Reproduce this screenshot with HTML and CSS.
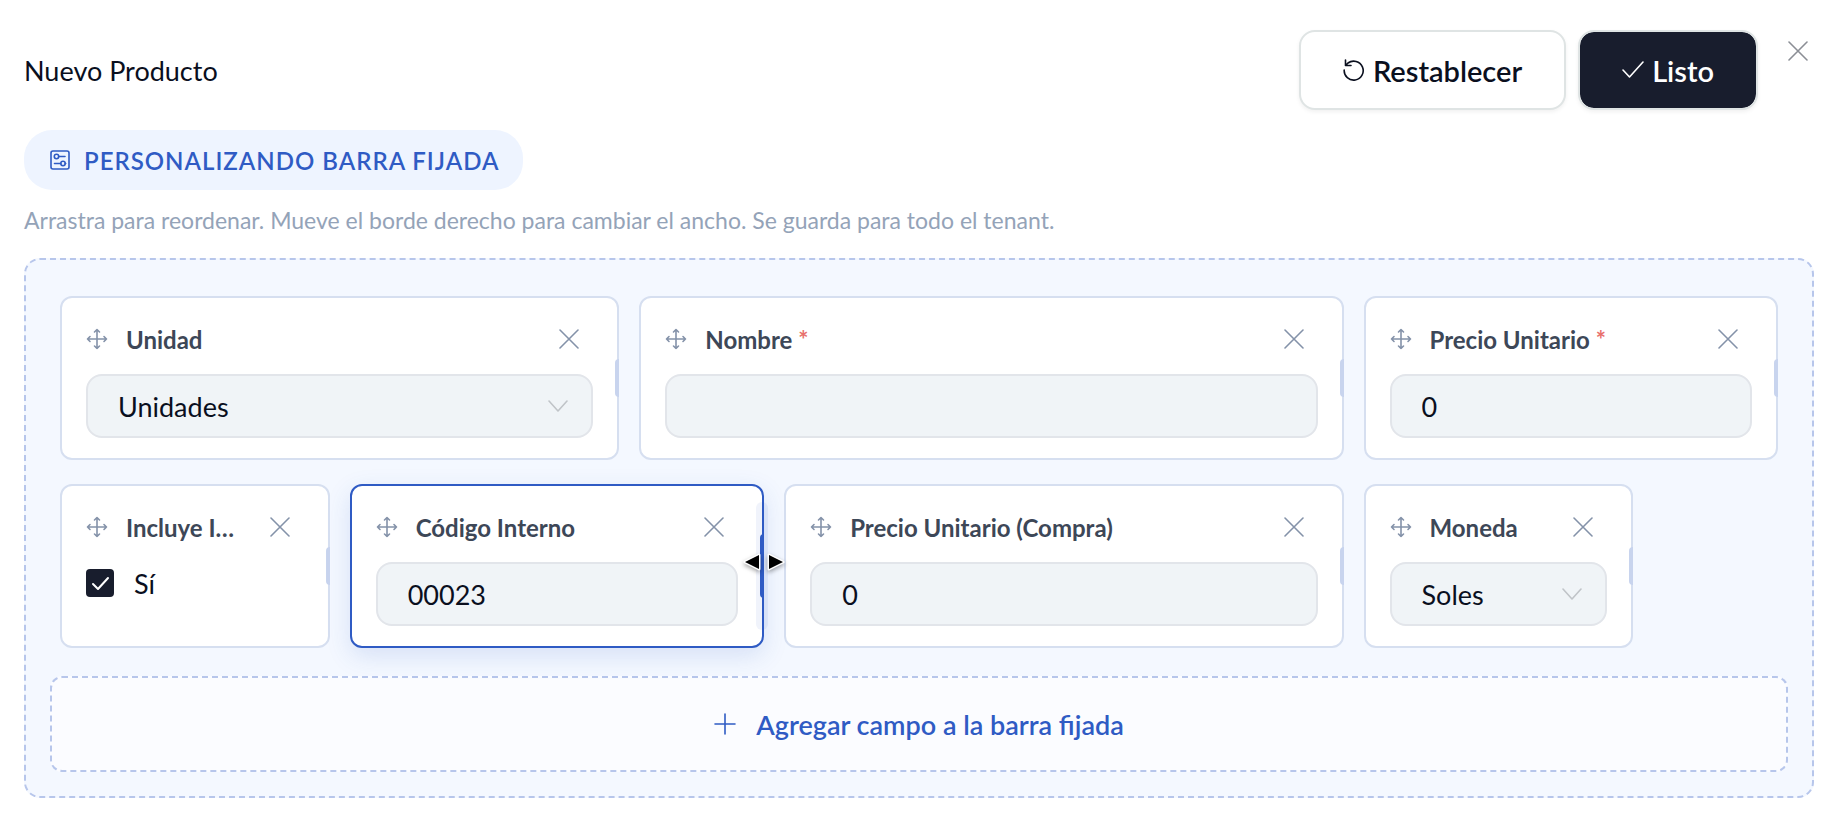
FILE: index.html
```html
<!DOCTYPE html>
<html lang="es">

    <head>
        <meta charset="UTF-8">
        <meta name="viewport" content="width=device-width, initial-scale=1.0">
        <title>Nuevo Producto</title>
        <link rel="stylesheet" href="styles.css">
    </head>

    <body>
        <!-- Iconos compartidos -->
        <svg class="sprite" aria-hidden="true">
            <symbol id="icon-move" viewBox="0 0 22 22">
                <path d="M11 1.500v19M1.500 11h19M8.500 4L11 1.500L13.500 4M8.500 18L11 20.500l2.500-2.500M4 8.500L1.500 11L4 13.500M18 8.500l2.500 2.500L18 13.500" />
            </symbol>
            <symbol id="icon-close" viewBox="0 0 20 20">
                <path d="M1 1l18 18M19 1L1 19" />
            </symbol>
            <symbol id="icon-chevron" viewBox="0 0 20 12">
                <path d="M1 1l9 10 9-10" />
            </symbol>
        </svg>

        <main class="dialog">
            <header class="dialog-header">
                <h1>Nuevo Producto</h1>
                <div class="actions">
                    <button type="button" class="btn">
                        <svg class="icon" width="22" height="22" viewBox="0 0 22 22"><path d="M2.500 1v5.500H8M2.500 6.500L5 4A9.500 9.500 0 1 1 1.200 11" /></svg>
                        Restablecer
                    </button>
                    <button type="button" class="btn btn-dark">
                        <svg class="icon" width="22" height="22" viewBox="0 0 22 22"><path d="M1 11l6.500 7L21 3" /></svg>
                        Listo
                    </button>
                </div>
                <button type="button" class="dialog-close" aria-label="Cerrar">
                    <svg class="icon" width="20" height="20"><use href="#icon-close" /></svg>
                </button>
            </header>

            <div class="badge">
                <svg class="icon" width="20" height="20" viewBox="0 0 20 20">
                    <rect x="1" y="1" width="18" height="18" rx="2" />
                    <circle cx="6.500" cy="6.500" r="2.200" />
                    <circle cx="13" cy="13.500" r="2.200" />
                    <path d="M8.700 6.500H15M4.500 13.500h6.300M15.200 13.500h.5" />
                </svg>
                PERSONALIZANDO BARRA FIJADA
            </div>
            <p class="hint">Arrastra para reordenar. Mueve el borde derecho para cambiar el ancho. Se guarda para todo el tenant.</p>

            <section class="canvas">
                <div class="grid">
                    <div class="card span-4">
                        <div class="card-header">
                            <svg class="icon" width="22" height="22"><use href="#icon-move" /></svg>
                            <label for="unidad">Unidad</label>
                            <button type="button" class="remove" aria-label="Quitar Unidad"><svg class="icon" width="20" height="20"><use href="#icon-close" /></svg></button>
                        </div>
                        <div class="select">
                            <select id="unidad" class="control"><option>Unidades</option></select>
                            <svg class="icon" width="20" height="12"><use href="#icon-chevron" /></svg>
                        </div>
                        <span class="handle"></span>
                    </div>

                    <div class="card span-5">
                        <div class="card-header">
                            <svg class="icon" width="22" height="22"><use href="#icon-move" /></svg>
                            <label for="nombre">Nombre <span class="required">*</span></label>
                            <button type="button" class="remove" aria-label="Quitar Nombre"><svg class="icon" width="20" height="20"><use href="#icon-close" /></svg></button>
                        </div>
                        <input type="text" id="nombre" class="control">
                        <span class="handle"></span>
                    </div>

                    <div class="card span-3">
                        <div class="card-header">
                            <svg class="icon" width="22" height="22"><use href="#icon-move" /></svg>
                            <label for="precio">Precio Unitario <span class="required">*</span></label>
                            <button type="button" class="remove" aria-label="Quitar Precio Unitario"><svg class="icon" width="20" height="20"><use href="#icon-close" /></svg></button>
                        </div>
                        <input type="text" id="precio" class="control" value="0">
                        <span class="handle"></span>
                    </div>

                    <div class="card span-2">
                        <div class="card-header">
                            <svg class="icon" width="22" height="22"><use href="#icon-move" /></svg>
                            <span class="label">Incluye IGV</span>
                            <button type="button" class="remove" aria-label="Quitar Incluye IGV"><svg class="icon" width="20" height="20"><use href="#icon-close" /></svg></button>
                        </div>
                        <label class="check">
                            <input type="checkbox" checked>
                            <svg class="icon" width="28" height="28" viewBox="0 0 28 28"><path d="M7 15l5 5L22 9" /></svg>
                            Sí
                        </label>
                        <span class="handle"></span>
                    </div>

                    <div class="card span-3 active">
                        <div class="card-header">
                            <svg class="icon" width="22" height="22"><use href="#icon-move" /></svg>
                            <label for="codigo">Código Interno</label>
                            <button type="button" class="remove" aria-label="Quitar Código Interno"><svg class="icon" width="20" height="20"><use href="#icon-close" /></svg></button>
                        </div>
                        <input type="text" id="codigo" class="control" value="00023">
                        <span class="handle-area"></span>
                        <span class="handle"></span>
                        <svg class="resize-cursor" width="44" height="24" viewBox="0 0 44 24">
                            <path d="M3 12L17 5v14zM41 12L27 5v14z" />
                        </svg>
                    </div>

                    <div class="card span-4">
                        <div class="card-header">
                            <svg class="icon" width="22" height="22"><use href="#icon-move" /></svg>
                            <label for="compra">Precio Unitario (Compra)</label>
                            <button type="button" class="remove" aria-label="Quitar Precio Unitario (Compra)"><svg class="icon" width="20" height="20"><use href="#icon-close" /></svg></button>
                        </div>
                        <input type="text" id="compra" class="control" value="0">
                        <span class="handle"></span>
                    </div>

                    <div class="card span-2">
                        <div class="card-header">
                            <svg class="icon" width="22" height="22"><use href="#icon-move" /></svg>
                            <label for="moneda">Moneda</label>
                            <button type="button" class="remove" aria-label="Quitar Moneda"><svg class="icon" width="20" height="20"><use href="#icon-close" /></svg></button>
                        </div>
                        <div class="select">
                            <select id="moneda" class="control"><option>Soles</option></select>
                            <svg class="icon" width="20" height="12"><use href="#icon-chevron" /></svg>
                        </div>
                        <span class="handle"></span>
                    </div>
                </div>

                <button type="button" class="add-field">
                    <svg class="icon" width="22" height="22" viewBox="0 0 22 22"><path d="M11 1v20M1 11h20" /></svg>
                    Agregar campo a la barra fijada
                </button>
            </section>
        </main>
    </body>

</html>
```
FILE: styles.css
```css
:root {
    --blue: #2f5bc4;
    --dark: #181d2d;
    --text: #0a0f1e;
    --label: #3d4757;
    --muted: #8492a9;
    --dashed: #b7c6eb;
    --card-border: #d6dff0;
}

*,
*::before,
*::after {
    box-sizing: border-box;
}

body {
    margin: 0;
    font-family: Lato, "Open Sans", sans-serif;
    font-size: 27px;
    color: var(--text);
    background: white;
}

button,
input,
select {
    font: inherit;
    color: inherit;
}

button {
    cursor: pointer;
}

.sprite {
    position: absolute;
    width: 0;
    height: 0;
}

.icon {
    flex: none;
    fill: none;
    stroke: currentColor;
    stroke-width: 1.6;
    stroke-linecap: round;
    stroke-linejoin: round;
}

.dialog {
    padding: 30px 30px 30px 24px;
}

/* Header */
.dialog-header {
    display: flex;
    align-items: center;
    margin-bottom: 20px;
}

h1 {
    margin: 0;
    font-size: 27px;
    font-weight: 400;
}

.actions {
    display: flex;
    gap: 12px;
    margin-left: auto;
}

.btn {
    display: flex;
    align-items: center;
    gap: 8px;
    height: 80px;
    padding: 0 42px;
    border: 2px solid #dfe4e4;
    border-radius: 16px;
    background: white;
    font-size: 29px;
    font-weight: 600;
    box-shadow: 0 2px 4px rgba(0, 0, 0, 0.06);
}

.btn-dark {
    background: var(--dark);
    background-clip: padding-box;
    color: white;
}

.dialog-close {
    display: flex;
    align-items: center;
    justify-content: center;
    align-self: flex-start;
    width: 32px;
    height: 42px;
    margin-left: 24px;
    padding: 0;
    border: none;
    background: none;
    color: #8b8e95;
}

.badge {
    display: flex;
    align-items: center;
    gap: 14px;
    width: fit-content;
    height: 60px;
    padding: 0 24px 0 26px;
    border-radius: 28px;
    background: #eef4ff;
    color: var(--blue);
    font-size: 24px;
    font-weight: 600;
    letter-spacing: 1px;
}

.hint {
    margin: 14px 0 22px;
    font-size: 23px;
    line-height: 32px;
    color: #94a3b8;
}

/* Canvas */
.canvas {
    padding: 24px;
    border: 2px dashed var(--dashed);
    border-radius: 16px;
    background: #f4f8ff;
}

.grid {
    display: grid;
    grid-template-columns: repeat(12, minmax(0, 1fr));
    gap: 24px 20px;
    padding: 12px 10px;
    margin-bottom: 16px;
}

.card {
    position: relative;
    padding: 20px 24px;
    border: 2px solid var(--card-border);
    border-radius: 12px;
    background: white;
}

.span-2 {
    grid-column: span 2;
}

.span-3 {
    grid-column: span 3;
}

.span-4 {
    grid-column: span 4;
}

.span-5 {
    grid-column: span 5;
}

.active {
    z-index: 1;
    border-color: var(--blue);
    box-shadow: 0 8px 24px rgba(47, 91, 196, 0.15);
}

.card-header {
    display: flex;
    align-items: center;
    height: 42px;
    margin-bottom: 14px;
    color: var(--muted);
}

.card-header label,
.card-header .label {
    flex: 1;
    min-width: 0;
    margin-left: 18px;
    font-size: 24px;
    font-weight: 700;
    color: var(--label);
    white-space: nowrap;
    overflow: hidden;
    text-overflow: ellipsis;
}

.required {
    color: #e8706c;
}

.remove {
    display: flex;
    flex: none;
    align-items: center;
    justify-content: center;
    width: 48px;
    height: 42px;
    margin-left: 12px;
    padding: 0;
    border: none;
    background: none;
}

.control {
    display: block;
    width: 100%;
    height: 64px;
    padding: 0 30px;
    border: 2px solid #e2e5ea;
    border-radius: 16px;
    outline: none;
    background: #f0f4f7;
    appearance: none;
}

.select {
    position: relative;
}

.select .icon {
    position: absolute;
    top: 26px;
    right: 25px;
    color: #c0c4c8;
    pointer-events: none;
}

.check {
    position: relative;
    display: flex;
    align-items: center;
    gap: 20px;
    height: 46px;
}

.check input {
    width: 28px;
    height: 28px;
    margin: 0;
    border-radius: 4px;
    background: var(--dark);
    appearance: none;
}

.check .icon {
    position: absolute;
    left: 0;
    color: white;
    stroke-width: 2;
}

.card-header:has(+ .check) {
    margin-bottom: 12px;
}

/* Resize handle on the right edge */
.handle {
    position: absolute;
    top: calc(50% - 19px);
    right: -2px;
    width: 4px;
    height: 38px;
    border-radius: 4px 0 0 4px;
    background: #c8d4ee;
}

.active .handle {
    top: calc(50% - 32px);
    height: 64px;
    background: var(--blue);
}

.handle-area {
    position: absolute;
    top: 16px;
    right: -6px;
    width: 12px;
    height: 128px;
    border-radius: 6px;
    background: rgba(47, 91, 196, 0.07);
}

.resize-cursor {
    position: absolute;
    top: 64px;
    right: -24px;
    fill: black;
    stroke: white;
    stroke-width: 3;
    stroke-linejoin: round;
    paint-order: stroke;
    filter: drop-shadow(0 2px 2px rgba(0, 0, 0, 0.35));
}

.add-field {
    display: flex;
    align-items: center;
    justify-content: center;
    gap: 20px;
    width: 100%;
    height: 96px;
    border: 2px dashed var(--dashed);
    border-radius: 12px;
    background: #fbfcff;
    color: var(--blue);
    font-weight: 600;
}
```
